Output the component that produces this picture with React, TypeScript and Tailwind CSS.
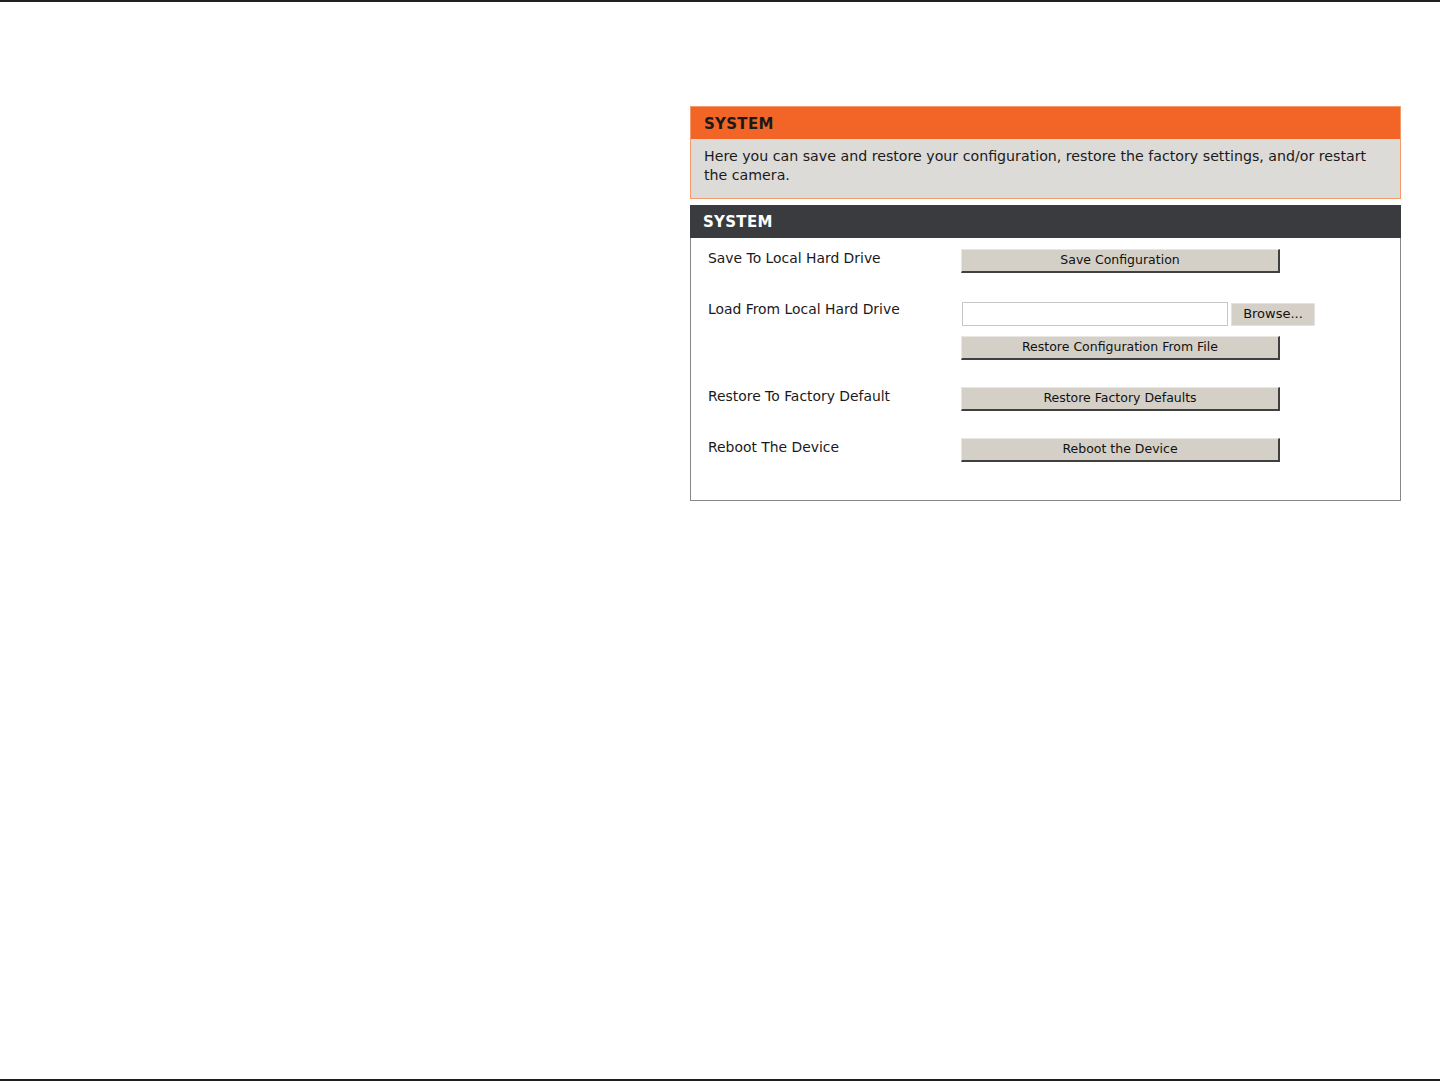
import React from "react";

const font = { fontFamily: "Tahoma, 'DejaVu Sans', 'Noto Sans', sans-serif" };

function Btn({ children }: { children: React.ReactNode }) {
  return (
    <button className="w-[319px] h-[24px] bg-[#d4d0c8] border-t border-l border-[#e9e7e3] border-r-2 border-b-2 border-r-[#404040] border-b-[#404040] text-[12.5px] text-[#111] leading-none flex items-center justify-center">
      {children}
    </button>
  );
}

export default function App() {
  return (
    <div
      className="w-[1440px] h-[1081px] bg-white border-t-2 border-b-2 border-[#231f20] overflow-hidden"
      style={font}
    >
      <div className="ml-[690px] mt-[104px] w-[711px]">
        {/* Orange info box */}
        <div className="border border-[#f59a6a]">
          <div className="h-[32px] bg-[#f26526] pl-[13px] flex items-center">
            <span className="font-bold text-[15px] tracking-[0.3px] text-[#1a1a1a] mt-[2px]">SYSTEM</span>
          </div>
          <div className="bg-[#dddbd8] pl-[13px] pr-[8px] pt-[8px] pb-[13px] text-[14.2px] leading-[19px] text-[#1a1a1a]">
            Here you can save and restore your configuration, restore the factory settings, and/or restart the camera.
          </div>
        </div>

        {/* System panel */}
        <div className="mt-[6px]">
          <div className="h-[33px] bg-[#3a3b3e] pl-[13px] flex items-center">
            <span className="font-bold text-[15px] tracking-[0.3px] text-white mt-[2px]">SYSTEM</span>
          </div>
          <div className="border border-t-0 border-[#888888] pt-[11px] pb-[38px] text-[13.9px] text-[#1a1a1a]">
            <div className="flex">
              <div className="w-[270px] pl-[17px] leading-[20px] -mt-[1px]">Save To Local Hard Drive</div>
              <Btn>Save Configuration</Btn>
            </div>
            <div className="flex mt-[29px]">
              <div className="w-[270px] pl-[17px] leading-[20px] -mt-[3px]">Load From Local Hard Drive</div>
              <div className="flex flex-col">
                <div className="flex items-center">
                  <div className="w-[266px] h-[24px] bg-white border border-[#c6c6c6] ml-[1px]"></div>
                  <div className="ml-[3px] w-[84px] h-[23px] bg-[#d4d0c8] border border-[#e4e2de] text-[13px] flex items-center justify-center text-[#111]">
                    Browse...
                  </div>
                </div>
                <div className="mt-[10px]">
                  <Btn>Restore Configuration From File</Btn>
                </div>
              </div>
            </div>
            <div className="flex mt-[27px]">
              <div className="w-[270px] pl-[17px] leading-[20px] -mt-[1px]">Restore To Factory Default</div>
              <Btn>Restore Factory Defaults</Btn>
            </div>
            <div className="flex mt-[27px]">
              <div className="w-[270px] pl-[17px] leading-[20px] -mt-[1px]">Reboot The Device</div>
              <Btn>Reboot the Device</Btn>
            </div>
          </div>
        </div>
      </div>
    </div>
  );
}
